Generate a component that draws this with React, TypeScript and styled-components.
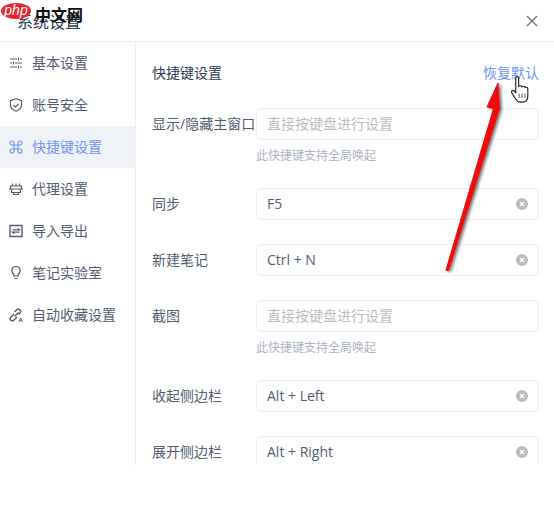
import { createGlobalStyle } from "styled-components";
import styled from "styled-components";

const GlobalStyle = createGlobalStyle`
  html, body {
    margin: 0;
    padding: 0;
    background: #ffffff;
  }
  body {
    font-family: "Open Sans", "Noto Sans CJK SC", sans-serif;
    overflow: hidden;
  }
`;

interface FieldData {
  label: string;
  value?: string;
  hint?: string;
}

const fields: FieldData[] = [
  { label: "显示/隐藏主窗口", hint: "此快捷键支持全局唤起" },
  { label: "同步", value: "F5" },
  { label: "新建笔记", value: "Ctrl + N" },
  { label: "截图", hint: "此快捷键支持全局唤起" },
  { label: "收起侧边栏", value: "Alt + Left" },
  { label: "展开侧边栏", value: "Alt + Right" },
];

const IconBase = ({ children }: { children: React.ReactNode }) => (
  <svg width="16" height="16" viewBox="0 0 16 16" fill="none" stroke="currentColor" strokeWidth="1.2">
    {children}
  </svg>
);

const menu = [
  {
    label: "基本设置",
    icon: (
      <IconBase>
        <path d="M2 4h7M12 4h2M2 8h2M7 8h7M2 12h7M12 12h2M10.500 2.500v3M5.500 6.500v3M10.500 10.500v3" />
      </IconBase>
    ),
  },
  {
    label: "账号安全",
    icon: (
      <IconBase>
        <path d="M8 1.800l5.500 1.800v4.400c0 3-2.500 5.200-5.500 6.200-3-1-5.500-3.200-5.500-6.200V3.600z" />
        <path d="M5.500 8l2 2 3-3" />
      </IconBase>
    ),
  },
  {
    label: "快捷键设置",
    active: true,
    icon: (
      <IconBase>
        <path d="M6 6h4v4H6zM6 6V4a2 2 0 1 0-2 2h2M10 6V4a2 2 0 1 1 2 2h-2M6 10v2a2 2 0 1 1-2-2h2M10 10v2a2 2 0 1 0 2-2h-2" />
      </IconBase>
    ),
  },
  {
    label: "代理设置",
    icon: (
      <IconBase>
        <path d="M1 8h14M2.500 5h11v3h-11zM3.500 8v3.500h9V8M5.500 11.500v2h5v-2M4.500 2.500V5M8 2.500V5M11.500 2.500V5" />
      </IconBase>
    ),
  },
  {
    label: "导入导出",
    icon: (
      <IconBase>
        <path d="M2 2.500h12v11H2z" strokeWidth="1.400" />
        <path d="M4.500 6.800h7L9.800 5.300M11.500 9.200h-7l1.700 1.500" />
      </IconBase>
    ),
  },
  {
    label: "笔记实验室",
    icon: (
      <IconBase>
        <path d="M8 1.500a4 4 0 0 0-2.200 7.400V11h4.400V8.900A4 4 0 0 0 8 1.500zM6.300 13.500h3.400" />
      </IconBase>
    ),
  },
  {
    label: "自动收藏设置",
    icon: (
      <IconBase>
        <path d="M6 7l-3.200 3.200a2.100 2.100 0 0 0 3 3L9 10M6.500 9.500l4-4M6.500 5l2-2a2.100 2.100 0 0 1 3.500 3l-1.500 1.500" strokeWidth="1.400" />
        <path d="M11 15l1.700-4 1.700 4M11.700 13.600h2" strokeWidth="0.9" />
      </IconBase>
    ),
  },
];

const Window = styled.div`
  width: 554px;
  height: 518px;
  position: relative;
  overflow: hidden;
  background: #ffffff;
`;

const Header = styled.header`
  height: 41px;
  display: flex;
  align-items: center;
  justify-content: space-between;
  padding: 0 15px 0 17px;
  border-bottom: 1px solid #eceef2;
`;

const Title = styled.h1`
  margin: 0;
  font-size: 16px;
  font-weight: 400;
  color: #2c3a55;
`;

const CloseButton = styled.button`
  width: 14px;
  height: 14px;
  padding: 0;
  border: 0;
  background: none;
  color: #6b7485;
  display: flex;
`;

const Body = styled.div`
  display: flex;
  height: 424px;
  overflow: hidden;
`;

const Sidebar = styled.nav`
  width: 135px;
  flex-shrink: 0;
  border-right: 1px solid #eceef2;
  display: flex;
  flex-direction: column;
`;

const MenuItem = styled.div<{ $active?: boolean }>`
  height: 42px;
  display: flex;
  align-items: center;
  gap: 8px;
  padding-left: 8px;
  font-size: 14px;
  line-height: 20px;
  color: ${(p) => (p.$active ? "#6f94f5" : "#525d71")};
  background: ${(p) => (p.$active ? "#eff2f7" : "transparent")};
`;

const Content = styled.main`
  flex: 1;
  padding: 20px 15px 0 16px;
`;

const TopRow = styled.div`
  display: flex;
  justify-content: space-between;
  align-items: center;
  height: 22px;
  margin-bottom: 24px;
  line-height: 20px;
`;

const SectionTitle = styled.span`
  font-size: 14px;
  color: #2c3a55;
`;

const ResetLink = styled.a`
  font-size: 14px;
  color: #6f94f5;
`;

const Field = styled.div`
  display: grid;
  grid-template-columns: 104px 283px;
  align-items: center;
  margin-bottom: 24px;
`;

const Label = styled.label`
  font-size: 14px;
  line-height: 32px;
  height: 32px;
  color: #525d71;
  white-space: nowrap;
`;

const InputBox = styled.div`
  height: 32px;
  box-sizing: border-box;
  border: 1px solid #eef0f6;
  border-radius: 4px;
  display: flex;
  align-items: center;
  justify-content: space-between;
  padding: 0 10px 2px;
  font-size: 14px;
  color: #525d71;
`;

const Placeholder = styled.span`
  color: #b9bdc4;
`;

const ClearIcon = styled.span`
  width: 12px;
  height: 12px;
  margin-top: 1px;
  border-radius: 50%;
  background: #bcbcbc;
  color: #ffffff;
  display: flex;
  align-items: center;
  justify-content: center;
`;

const Hint = styled.div`
  grid-column: 2;
  height: 24px;
  line-height: 32px;
  font-size: 12px;
  color: #aab3c2;
`;

const Watermark = styled.div`
  position: absolute;
  left: 1px;
  top: 3px;
  display: flex;
  align-items: flex-start;
  gap: 4px;
`;

const PhpBadge = styled.span`
  width: 30px;
  height: 16px;
  border-radius: 50%;
  background: #e8262a;
  color: #ffffff;
  font-family: "Liberation Sans", sans-serif;
  font-style: italic;
  font-size: 14px;
  line-height: 15px;
  text-align: center;
`;

const WatermarkText = styled.span`
  font-family: "Noto Sans CJK SC", sans-serif;
  font-weight: 700;
  font-size: 16px;
  line-height: 22px;
  color: #111111;
`;

const ArrowLayer = styled.svg`
  position: absolute;
  left: 430px;
  top: 70px;
`;

const CursorLayer = styled.svg`
  position: absolute;
  left: 510px;
  top: 75px;
`;

const App = () => {
  return (
    <Window>
      <GlobalStyle />
      <Header>
        <Title>系统设置</Title>
        <CloseButton>
          <svg width="14" height="14" viewBox="0 0 14 14" stroke="currentColor" strokeWidth="1.400">
            <path d="M2 2l10 10M12 2L2 12" />
          </svg>
        </CloseButton>
      </Header>
      <Body>
        <Sidebar>
          {menu.map((item) => (
            <MenuItem key={item.label} $active={item.active}>
              {item.icon}
              <span>{item.label}</span>
            </MenuItem>
          ))}
        </Sidebar>
        <Content>
          <TopRow>
            <SectionTitle>快捷键设置</SectionTitle>
            <ResetLink>恢复默认</ResetLink>
          </TopRow>
          {fields.map((f) => (
            <Field key={f.label}>
              <Label>{f.label}</Label>
              <InputBox>
                {f.value ? f.value : <Placeholder>直接按键盘进行设置</Placeholder>}
                {f.value && (
                  <ClearIcon>
                    <svg width="6" height="6" viewBox="0 0 6 6" stroke="currentColor" strokeWidth="1.200">
                      <path d="M1 1l4 4M5 1L1 5" />
                    </svg>
                  </ClearIcon>
                )}
              </InputBox>
              {f.hint && <Hint>{f.hint}</Hint>}
            </Field>
          ))}
        </Content>
      </Body>
      <Watermark>
        <PhpBadge>php</PhpBadge>
        <WatermarkText>中文网</WatermarkText>
      </Watermark>
      <ArrowLayer width="80" height="210" viewBox="0 0 80 210">
        <defs>
          <filter id="arrowShadow" x="-40%" y="-10%" width="180%" height="120%">
            <feDropShadow dx="2" dy="1" stdDeviation="1.500" floodColor="#000000" floodOpacity="0.55" />
          </filter>
        </defs>
        <path
          d="M68 13L57 37L63.500 38.500L16 200L18.500 200.800L69 40L69.500 40Z"
          fill="#ee0a0e"
          stroke="#ee0a0e"
          strokeWidth="1"
          strokeLinejoin="round"
          filter="url(#arrowShadow)"
        />
      </ArrowLayer>
      <CursorLayer width="23" height="30" viewBox="0 0 20 26">
        <path
          d="M5 2.500c0-1.500 2.500-1.500 2.500 0V10c.5-1 2.500-1 2.800.3.500-.9 2.400-.7 2.700.6.600-.7 2.500-.4 2.500 1.200V18c0 3-1.500 5.500-4.500 5.500H9c-2 0-3-1-4-2.500L1.500 15.500c-.8-1.500 1-2.800 2.200-1.700L5 15.500z"
          fill="#ffffff"
          stroke="#222222"
          strokeWidth="1"
          strokeLinejoin="round"
        />
        <path d="M8 16v4M10.500 16v4M13 16v4" stroke="#555555" strokeWidth="0.800" />
      </CursorLayer>
    </Window>
  );
};

export default App;
